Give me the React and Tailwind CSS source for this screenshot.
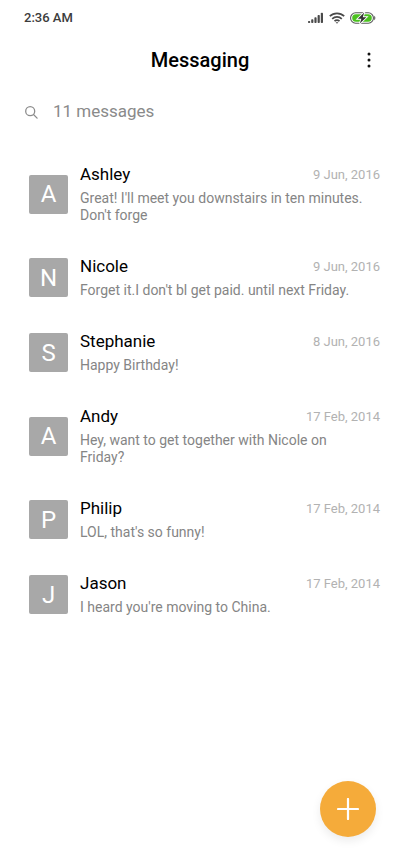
const messages = [
  { name: "Ashley", date: "9 Jun, 2016", text: "Great! I'll meet you downstairs in ten minutes. Don't forge" },
  { name: "Nicole", date: "9 Jun, 2016", text: "Forget it.I don't bl get paid. until next Friday." },
  { name: "Stephanie", date: "8 Jun, 2016", text: "Happy Birthday!" },
  { name: "Andy", date: "17 Feb, 2014", text: "Hey, want to get together with Nicole on Friday?" },
  { name: "Philip", date: "17 Feb, 2014", text: "LOL, that's so funny!" },
  { name: "Jason", date: "17 Feb, 2014", text: "I heard you're moving to China." },
]

function SignalIcon() {
  return (
    <svg width="16" height="12" viewBox="0 0 16 12" fill="#4a4a4a" aria-hidden="true">
      <rect x="0" y="9" width="2.2" height="2" rx="0.8" />
      <rect x="3.2" y="7.3" width="2.2" height="3.7" rx="0.8" />
      <rect x="6.4" y="5.3" width="2.2" height="5.7" rx="0.8" />
      <rect x="9.6" y="3" width="2.2" height="8" rx="0.8" />
      <rect x="12.8" y="0.8" width="2.2" height="10.2" rx="0.8" />
    </svg>
  )
}

function WifiIcon() {
  return (
    <svg width="16" height="12" viewBox="0 0 16 12" fill="none" stroke="#4a4a4a" strokeWidth="1.7" aria-hidden="true">
      <path d="M0.8 4.2a10.4 10.4 0 0 1 14.4 0" />
      <path d="M3.2 6.8a7 7 0 0 1 9.6 0" />
      <path d="M5.5 9.2a3.7 3.7 0 0 1 5 0" />
      <path d="M6.6 10.3h2.8L8 11.8z" fill="#4a4a4a" stroke="none" />
    </svg>
  )
}

function BatteryIcon() {
  return (
    <svg width="26" height="12" viewBox="0 0 26 12" aria-hidden="true">
      <rect x="0.6" y="0.8" width="22.8" height="10.4" rx="5" fill="#fff" stroke="#5a5a5a" strokeWidth="1.1" />
      <path d="M24.2 3.8c1.6.7 1.6 3.7 0 4.4z" fill="#5a5a5a" />
      <rect x="2.2" y="2.3" width="19.6" height="7.4" rx="3.7" fill="#4bc21f" />
      <path d="M14.2 0.6 7.8 6.8h3.6L9.8 11.6l6.6-6.4h-3.6z" fill="#333" stroke="#fff" strokeWidth="1.8" paintOrder="stroke" />
    </svg>
  )
}

function StatusBar() {
  return (
    <div className="flex h-9 items-center justify-between px-6">
      <span className="text-[13px] font-medium text-[#3c3c3c]">2:36 AM</span>
      <div className="flex items-center gap-[5px]">
        <SignalIcon />
        <WifiIcon />
        <BatteryIcon />
      </div>
    </div>
  )
}

function MessageRow({ message }) {
  return (
    <li className="flex items-center gap-3 py-4">
      <div className="flex size-[39px] shrink-0 items-center justify-center rounded-xs bg-[#a8a8a8] text-2xl text-white">
        {message.name[0]}
      </div>
      <div className="min-w-0 flex-1">
        <div className="flex items-end justify-between leading-5">
          <h2 className="text-[17px] text-black">{message.name}</h2>
          <time className="text-[13px] leading-[18px] text-[#b2b2b2]">{message.date}</time>
        </div>
        <p className="mt-1.5 pr-3 text-[14px] leading-[17px] text-[#858585]">{message.text}</p>
      </div>
    </li>
  )
}

export default function App() {
  return (
    <div className="relative min-h-screen bg-white font-['Roboto',sans-serif]">
      <StatusBar />

      <header className="grid h-12 grid-cols-[1fr_auto_1fr] items-center px-5">
        <h1 className="col-start-2 text-[20px] font-medium text-black">Messaging</h1>
        <button type="button" aria-label="More options" className="flex h-8 w-[22px] items-center justify-center justify-self-end">
          <svg width="4" height="18" viewBox="0 0 4 18" fill="#111">
            <circle cx="2" cy="3" r="1.5" />
            <circle cx="2" cy="9" r="1.5" />
            <circle cx="2" cy="15" r="1.5" />
          </svg>
        </button>
      </header>

      <label className="flex h-14 items-center gap-3.5 px-6">
        <svg width="15" height="15" viewBox="0 0 15 15" fill="none" stroke="#8c8c8c" strokeWidth="1.3" className="shrink-0" aria-hidden="true">
          <circle cx="6.2" cy="6.2" r="4.5" />
          <path d="m9.5 9.5 3.6 3.6" strokeLinecap="round" />
        </svg>
        <input
          type="search"
          aria-label="Search messages"
          placeholder="11 messages"
          className="min-w-0 flex-1 text-[17px] text-black outline-none placeholder:text-[#8a8a8a]"
        />
      </label>

      <ul className="mt-2 pr-5 pl-[29px]">
        {messages.map((message) => (
          <MessageRow key={message.name} message={message} />
        ))}
      </ul>

      <button
        type="button"
        aria-label="New message"
        className="absolute right-6 bottom-[29px] flex size-14 items-center justify-center rounded-full bg-[#f5ab3a] shadow-[0_4px_10px_rgba(0,0,0,0.08)]"
      >
        <svg width="22" height="22" viewBox="0 0 22 22" stroke="#fff" strokeWidth="2.2" strokeLinecap="round">
          <path d="M11 1v20M1 11h20" />
        </svg>
      </button>
    </div>
  )
}
